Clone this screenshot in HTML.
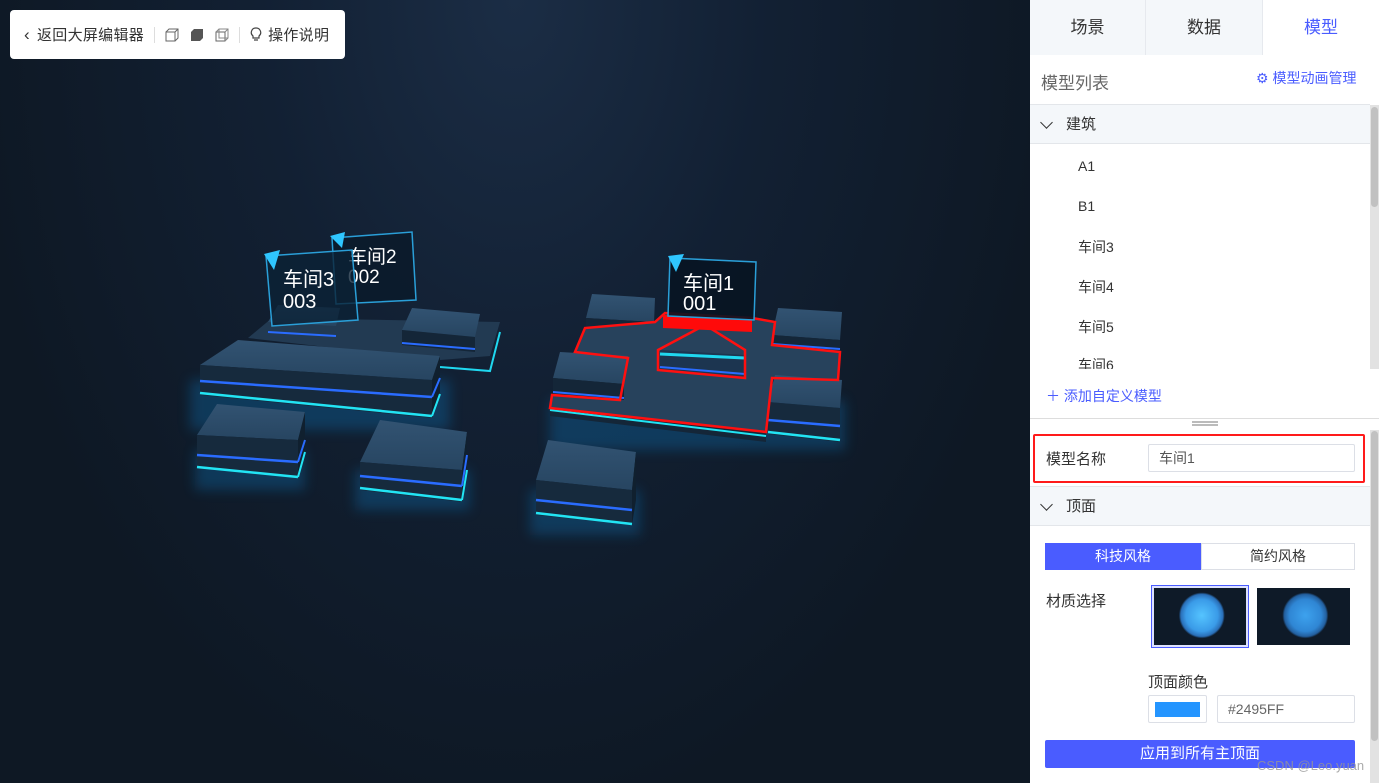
<!DOCTYPE html>
<html><head><meta charset="utf-8"><style>
*{margin:0;padding:0;box-sizing:border-box}
body{width:1379px;height:783px;overflow:hidden;font-family:"Liberation Sans","Noto Sans CJK SC",sans-serif;position:relative;background:#0f1926}
.scene{position:absolute;left:0;top:0;width:1030px;height:783px;background:radial-gradient(ellipse at 50% 0%,#1b2d45 0%,#122033 35%,#0e1824 75%)}
.tb{position:absolute;left:10px;top:10px;width:335px;height:49px;background:#fff;border-radius:4px;font-size:15px;color:#333;display:flex;align-items:center;padding-left:14px;letter-spacing:0.3px}
.tb .sep{width:1px;height:16px;background:#ddd;margin:0 10px}
.panel{position:absolute;left:1030px;top:0;width:349px;height:783px;background:#fff}
.abs{position:absolute}
.tab{position:absolute;top:0;height:55px;line-height:55px;text-align:center;font-size:17px;color:#333;background:#f4f7fa}
.hd{position:absolute;left:0;width:340px;height:40px;background:#f4f7fa;border-top:1px solid #e3e6ea;border-bottom:1px solid #e3e6ea;font-size:15px;color:#333;line-height:40px;padding-left:36px}
.chev{position:absolute;left:12px;top:13px;width:9px;height:9px;border-right:1.5px solid #333;border-bottom:1.5px solid #333;transform:rotate(45deg)}
.li{position:absolute;left:48px;font-size:14px;color:#333}
.inp{position:absolute;border:1px solid #dcdfe6;border-radius:2px;background:#fff;font-size:14px;color:#555;padding-left:10px}
</style></head><body>
<div class="scene">
<svg width="1030" height="783" style="position:absolute;left:0;top:0">
<defs>
<filter id="gl"><feGaussianBlur stdDeviation="6"/></filter>
<linearGradient id="tp" x1="0" y1="0" x2="0" y2="1"><stop offset="0" stop-color="#325372"/><stop offset="1" stop-color="#274561"/></linearGradient>
</defs>
<g opacity="0.35" filter="url(#gl)" fill="#0a6fb0">
<rect x="190" y="380" width="260" height="50"/><rect x="195" y="450" width="110" height="40"/><rect x="355" y="470" width="115" height="40"/><rect x="530" y="490" width="110" height="45"/><rect x="550" y="400" width="295" height="50"/>
</g>
<polygon points="248,338 272,318 500,322 490,356 440,360" fill="#223a52"/>
<polyline points="440,367 490,371 500,332" fill="none" stroke="#1fd8f0" stroke-width="2"/>
<polygon points="402,330 412,308 480,314 475,337" fill="url(#tp)"/>
<polygon points="402,330 475,337 475,352 402,345" fill="#142638"/>
<line x1="402" y1="343" x2="475" y2="349" stroke="#2a6cff" stroke-width="2"/>
<polygon points="268,322 278,305 340,308 336,326" fill="url(#tp)"/>
<line x1="268" y1="332" x2="336" y2="336" stroke="#2a6cff" stroke-width="2"/>
<polygon points="200,365 238,340 440,356 432,380" fill="url(#tp)"/>
<polygon points="200,365 432,380 432,418 200,395" fill="#162a3d"/>
<polygon points="432,380 440,356 440,394 432,418" fill="#10202f"/>
<line x1="200" y1="381" x2="432" y2="397" stroke="#2a6cff" stroke-width="2.5"/>
<line x1="200" y1="393" x2="432" y2="416" stroke="#22e4f4" stroke-width="2.5"/>
<line x1="432" y1="397" x2="440" y2="378" stroke="#2a6cff" stroke-width="2"/>
<line x1="432" y1="416" x2="440" y2="394" stroke="#22e4f4" stroke-width="2"/>
<polygon points="197,435 217,404 305,412 298,440" fill="url(#tp)"/>
<polygon points="197,435 298,440 298,478 197,468" fill="#162a3d"/>
<polygon points="298,440 305,412 305,452 298,478" fill="#10202f"/>
<line x1="197" y1="455" x2="298" y2="462" stroke="#2a6cff" stroke-width="2.5"/>
<line x1="197" y1="467" x2="298" y2="477" stroke="#22e4f4" stroke-width="2.5"/>
<line x1="298" y1="462" x2="305" y2="440" stroke="#2a6cff" stroke-width="2"/><line x1="298" y1="477" x2="305" y2="452" stroke="#22e4f4" stroke-width="2"/>
<polygon points="360,462 380,420 467,432 462,470" fill="url(#tp)"/>
<polygon points="360,462 462,470 462,502 360,490" fill="#162a3d"/>
<polygon points="462,470 467,432 467,470 462,502" fill="#10202f"/>
<line x1="360" y1="476" x2="462" y2="486" stroke="#2a6cff" stroke-width="2.5"/>
<line x1="360" y1="488" x2="462" y2="500" stroke="#22e4f4" stroke-width="2.5"/>
<line x1="462" y1="486" x2="467" y2="455" stroke="#2a6cff" stroke-width="2"/><line x1="462" y1="500" x2="467" y2="470" stroke="#22e4f4" stroke-width="2"/>
<polygon points="536,480 548,440 636,452 632,490" fill="url(#tp)"/>
<polygon points="536,480 632,490 632,525 536,515" fill="#162a3d"/>
<polygon points="632,490 636,452 636,500 632,525" fill="#10202f"/>
<line x1="536" y1="500" x2="632" y2="510" stroke="#2a6cff" stroke-width="2.5"/>
<line x1="536" y1="513" x2="632" y2="524" stroke="#22e4f4" stroke-width="2.5"/>
<polygon points="586,318 592,294 655,298 654,322" fill="url(#tp)"/>
<polygon points="586,318 654,322 654,334 586,330" fill="#142638"/>
<polygon points="772,335 778,308 842,312 840,340" fill="url(#tp)"/>
<polygon points="772,335 840,340 840,352 772,347" fill="#142638"/>
<line x1="772" y1="344" x2="840" y2="349" stroke="#2a6cff" stroke-width="2"/>
<polygon points="575,352 585,328 655,322 665,313 752,318 775,322 772,345 840,352 838,380 772,378 766,432 550,408 552,395 620,400 628,358" fill="#27425c"/>
<polygon points="550,408 766,432 766,442 550,416" fill="#142638"/>
<line x1="550" y1="410" x2="766" y2="436" stroke="#22e4f4" stroke-width="2"/>
<polygon points="553,378 560,352 628,356 624,384" fill="url(#tp)"/>
<polygon points="553,378 624,384 624,400 553,394" fill="#142638"/>
<line x1="553" y1="392" x2="624" y2="398" stroke="#2a6cff" stroke-width="2"/>
<polygon points="768,402 775,375 842,380 840,408" fill="url(#tp)"/>
<polygon points="768,402 840,408 840,442 768,434" fill="#162a3d"/>
<line x1="768" y1="420" x2="840" y2="426" stroke="#2a6cff" stroke-width="2.5"/>
<line x1="768" y1="432" x2="840" y2="440" stroke="#22e4f4" stroke-width="2.5"/>
<polygon points="660,350 745,355 745,378 658,370" fill="#1c3550"/>
<line x1="660" y1="354" x2="745" y2="358" stroke="#20d8f0" stroke-width="3"/>
<line x1="660" y1="367" x2="745" y2="374" stroke="#2a6cff" stroke-width="2"/>
<polygon points="575,352 585,328 655,322 665,313 752,318 775,322 772,345 840,352 838,380 772,378 766,432 550,408 552,395 620,400 628,358" fill="none" stroke="#ff1010" stroke-width="2.5"/>
<polygon points="658,350 705,325 745,350 745,378 658,370" fill="none" stroke="#ff1010" stroke-width="2.5"/>
<polygon points="663,315 752,318 752,332 663,328" fill="#ff0a0a"/>
<g>
<polygon points="332,238 412,232 416,300 336,304" fill="#0a1a2a" fill-opacity="0.75" stroke="#2a9fd8" stroke-width="1.5"/>
<polygon points="330,236 345,232 342,248" fill="#2fc6ff"/>
<text x="348" y="263" fill="#fff" font-size="19">车间2</text>
<text x="348" y="283" fill="#fff" font-size="19">002</text>
</g>
<g>
<polygon points="266,256 352,250 358,320 272,326" fill="#0b2236" fill-opacity="0.8" stroke="#2a9fd8" stroke-width="1.5"/>
<polygon points="264,254 280,250 274,270" fill="#2fc6ff"/>
<text x="283" y="286" fill="#fff" font-size="20">车间3</text>
<text x="283" y="308" fill="#fff" font-size="20">003</text>
</g>
<g>
<polygon points="670,258 756,262 754,320 668,316" fill="#081422" fill-opacity="0.9" stroke="#2a9fd8" stroke-width="1.5"/>
<polygon points="668,256 684,254 676,272" fill="#2fc6ff"/>
<text x="683" y="290" fill="#fff" font-size="20">车间1</text>
<text x="683" y="310" fill="#fff" font-size="20">001</text>
</g>
</svg>
<div class="tb">
<span style="font-size:17px;margin-right:7px">&#8249;</span>返回大屏编辑器
<span class="sep"></span>
<svg width="14" height="14" viewBox="0 0 14 14"><rect x="1" y="4" width="9" height="9" fill="none" stroke="#666"/><path d="M1 4 L4 1 H13 V10 L10 13 M10 4 L13 1" fill="none" stroke="#666"/></svg>
<span style="width:11px"></span>
<svg width="14" height="14" viewBox="0 0 14 14"><path d="M1 4 L4 1 H13 V10 L10 13 H1Z" fill="#555"/></svg>
<span style="width:11px"></span>
<svg width="14" height="14" viewBox="0 0 14 14"><rect x="1" y="4" width="9" height="9" fill="none" stroke="#666"/><path d="M1 4 L4 1 H13 V10 L10 13 M10 4 L13 1 M4 1 V10 H13" fill="none" stroke="#888"/></svg>
<span class="sep"></span>
<svg width="12" height="15" viewBox="0 0 12 15"><path d="M6 1 A4.5 4.5 0 0 1 9 9 V11 H3 V9 A4.5 4.5 0 0 1 6 1Z M4 13 H8" fill="none" stroke="#444" stroke-width="1.2"/></svg>
<span style="margin-left:6px">操作说明</span>
</div>
</div>
<div class="panel">
<div class="tab" style="left:0;width:116px;border-right:1px solid #e6e9ee">场景</div>
<div class="tab" style="left:116px;width:117px;border-right:1px solid #e6e9ee">数据</div>
<div class="tab" style="left:233px;width:116px;background:#fff;color:#4a5cff">模型</div>
<div class="abs" style="left:11px;top:69px;font-size:17px;color:#666">模型列表</div>
<div class="abs" style="left:226px;top:68px;font-size:14px;color:#4a5cff">⚙ 模型动画管理</div>
<div class="hd" style="top:104px"><span class="chev"></span>建筑</div>
<div class="li" style="top:158px">A1</div>
<div class="li" style="top:198px">B1</div>
<div class="li" style="top:237px">车间3</div>
<div class="li" style="top:277px">车间4</div>
<div class="li" style="top:317px">车间5</div>
<div class="abs" style="left:48px;top:357px;height:12px;overflow:hidden;font-size:14px;color:#333;line-height:17px">车间6</div>
<div class="abs" style="left:340px;top:105px;width:9px;height:264px;background:#e2e2e2"><div style="margin:2px 1px;height:100px;background:#c1c1c1;border-radius:4px"></div></div>
<div class="abs" style="left:16px;top:386px;font-size:14px;color:#4a5cff">＋ 添加自定义模型</div>
<div class="abs" style="left:0;top:418px;width:349px;height:1px;background:#ddd"></div>
<div class="abs" style="left:162px;top:421px;width:26px;height:5px;border-top:2px solid #bbb;border-bottom:2px solid #bbb"></div>
<div class="abs" style="left:340px;top:430px;width:9px;height:353px;background:#e2e2e2"><div style="margin:1px;height:310px;background:#c1c1c1;border-radius:4px"></div></div>
<div class="abs" style="left:3px;top:434px;width:332px;height:49px;border:2px solid #ff1a1a;border-radius:2px"></div>
<div class="abs" style="left:16px;top:448px;font-size:15px;color:#333">模型名称</div>
<div class="inp" style="left:118px;top:444px;width:207px;height:28px;line-height:26px">车间1</div>
<div class="hd" style="top:486px"><span class="chev"></span>顶面</div>
<div class="abs" style="left:15px;top:543px;width:156px;height:27px;background:#4a5cff;color:#fff;font-size:14px;text-align:center;line-height:27px">科技风格</div>
<div class="abs" style="left:171px;top:543px;width:154px;height:27px;border:1px solid #dcdfe6;color:#333;font-size:14px;text-align:center;line-height:25px">简约风格</div>
<div class="abs" style="left:16px;top:590px;font-size:15px;color:#333">材质选择</div>
<div class="abs" style="left:121px;top:585px;width:98px;height:63px;border:1px solid #4a5cff;padding:2px;background:#dde2ff"><div style="width:100%;height:100%;background:radial-gradient(circle at 52% 48%,#55c4ff 0,#3a9be8 16px,#2a6fb8 21px,#0e1a28 23px)"></div></div>
<div class="abs" style="left:227px;top:588px;width:93px;height:57px;background:radial-gradient(circle at 52% 48%,#3da2ee 0,#2f86d4 16px,#235f9e 21px,#0e1a28 23px)"></div>
<div class="abs" style="left:118px;top:671px;font-size:15px;color:#333">顶面颜色</div>
<div class="inp" style="left:118px;top:695px;width:59px;height:28px;padding:0"><div style="margin:6px;width:45px;height:15px;background:#2495ff"></div></div>
<div class="inp" style="left:187px;top:695px;width:138px;height:28px;line-height:26px;color:#666">#2495FF</div>
<div class="abs" style="left:15px;top:740px;width:310px;height:28px;background:#4a5cff;border-radius:2px;color:#fff;font-size:15px;text-align:center;line-height:28px">应用到所有主顶面</div>
<div class="abs" style="left:227px;top:758px;font-size:13px;color:rgba(150,150,150,.8)">CSDN @Leo.yuan</div>
</div>
</body></html>
